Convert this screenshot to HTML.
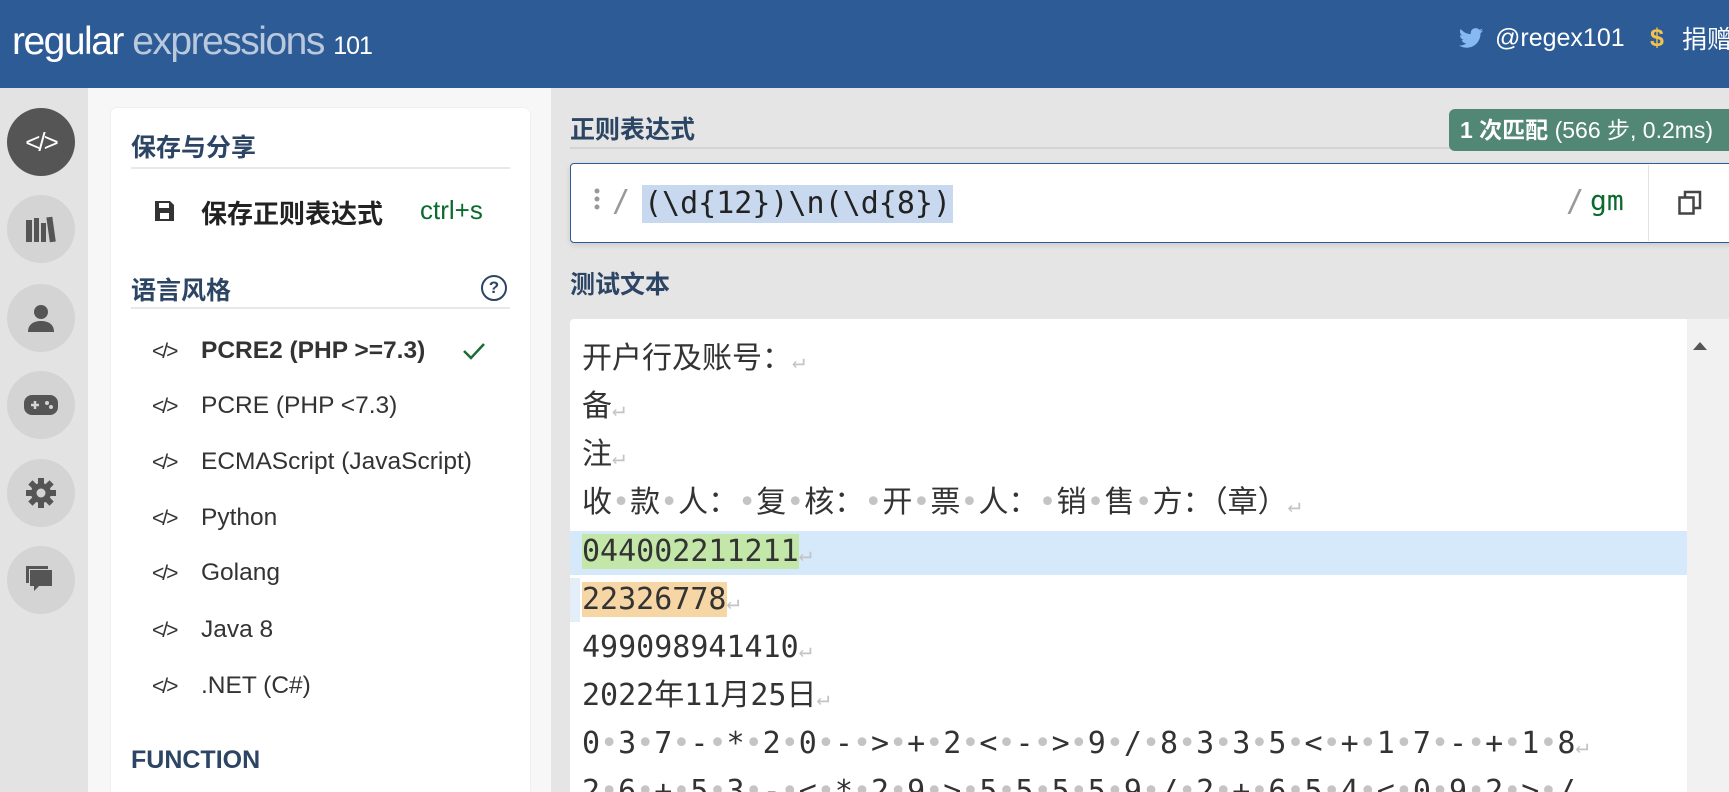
<!DOCTYPE html>
<html><head><meta charset="utf-8"><style>
*{box-sizing:border-box;margin:0;padding:0}
html,body{width:1729px;height:792px;overflow:hidden}
body{background:#e5e5e5;font-family:"Liberation Sans","Noto Sans CJK SC",sans-serif;position:relative}
.abs{position:absolute}
#hdr{left:0;top:0;width:1729px;height:88px;background:#2c5b96}
.logo{left:12px;top:20px;font-size:39px;color:#fff;letter-spacing:-1.5px;white-space:nowrap}
.logo .e{color:#b9c8dc}.logo .n{font-size:25px;letter-spacing:-1px}
.hr{top:24px;font-size:25px;color:#fff;white-space:nowrap}
#side{left:0;top:88px;width:88px;height:704px;background:#e3e3e3}
.circ{left:7px;width:68px;height:68px;border-radius:50%;background:#d4d4d4;display:flex;align-items:center;justify-content:center}
#pan{left:88px;top:88px;width:463px;height:704px;background:#f7f7f7}
#card{left:111px;top:108px;width:419px;height:684px;background:#fff;border-radius:6px 6px 0 0;box-shadow:0 0 2px rgba(0,0,0,.08)}
.h{font-weight:bold;font-size:25px;color:#2d4565;white-space:nowrap}
.line{height:2px;background:#e8e8e8}
.it{left:152px;font-size:24.5px;color:#333;white-space:nowrap}
.it .ic{display:inline-block;width:49px;font-size:21px;color:#333;letter-spacing:-2px}
.mono{font-family:"DejaVu Sans Mono","Noto Sans CJK SC",monospace}
#tb{left:570px;top:319px;width:1159px;height:473px;background:#fff;border-radius:4px 0 0 0;overflow:hidden}
.tl{left:12px;height:48px;line-height:48px;font-size:30px;color:#333;white-space:pre}
.d{color:#c4c4c4}.r{color:#c4c4c4;font-size:22px}
</style></head><body>
<div id="hdr" class="abs"></div>
<div class="abs logo">regular <span class="e">expressions</span> <span class="n">101</span></div>
<svg class="abs" style="left:1459px;top:28px" width="24" height="20" viewBox="0 0 24 20"><path d="M24 2.4c-.9.4-1.8.6-2.8.8 1-.6 1.800-1.600 2.2-2.7-1 .6-2 1-3.1 1.2C19.3.7 18 .1 16.6.1c-2.7 0-4.9 2.2-4.9 4.9 0 .4 0 .8.1 1.1C7.7 5.9 4.1 4 1.7 1 1.2 1.8 1 2.6 1 3.5c0 1.7.9 3.2 2.2 4.1-.8 0-1.6-.2-2.2-.6v.1c0 2.4 1.7 4.4 3.9 4.8-.4.1-.8.2-1.300.2-.3 0-.6 0-.9-.1.6 2 2.4 3.4 4.6 3.4-1.7 1.300-3.8 2.100-6.100 2.100H0c2.2 1.4 4.8 2.2 7.5 2.2 9.1 0 14-7.5 14-14v-.6c1-.7 1.8-1.6 2.5-2.5z" fill="#86b9f0"/></svg>
<div class="abs hr" style="left:1495px">@regex101</div>
<div class="abs hr" style="left:1650px;color:#f2c14e;font-weight:bold">$</div>
<div class="abs hr" style="left:1682px;top:20px">捐赠</div>

<div id="side" class="abs"></div>
<div class="abs circ" style="top:108px;background:#555"><span style="color:#fff;font-size:26px;letter-spacing:-2px">&lt;/&gt;</span></div>
<div class="abs circ" style="top:195px"><svg width="32" height="30"><rect x="1" y="6" width="6" height="22" fill="#555"/><rect x="9" y="4" width="5" height="24" fill="#555"/><rect x="16" y="9" width="5" height="19" fill="#555"/><rect x="23" y="3" width="6" height="25" fill="#555" transform="rotate(-8 26 15)"/></svg></div>
<div class="abs circ" style="top:284px"><svg width="30" height="30"><circle cx="15" cy="9" r="7" fill="#555"/><path d="M2 29c0-8 6-11 13-11s13 3 13 11z" fill="#555"/></svg></div>
<div class="abs circ" style="top:371px"><svg width="36" height="24"><rect x="1" y="2" width="34" height="20" rx="8" fill="#555"/><path d="M8 12h8M12 8v8" stroke="#d4d4d4" stroke-width="2.5"/><circle cx="24" cy="10" r="2" fill="#d4d4d4"/><circle cx="28" cy="14" r="2" fill="#d4d4d4"/></svg></div>
<div class="abs circ" style="top:459px"><svg width="32" height="32" viewBox="0 0 32 32"><g fill="#555"><circle cx="16" cy="16" r="10"/><rect x="13" y="1" width="6" height="30"/><rect x="13" y="1" width="6" height="30" transform="rotate(45 16 16)"/><rect x="13" y="1" width="6" height="30" transform="rotate(90 16 16)"/><rect x="13" y="1" width="6" height="30" transform="rotate(135 16 16)"/></g><circle cx="16" cy="16" r="4.5" fill="#d4d4d4"/></svg></div>
<div class="abs circ" style="top:546px"><svg width="32" height="30"><path d="M5 5h22v16H14l-5 5v-5H5z" fill="#555"/><path d="M1 1h22v3H4v14H1z" fill="#555"/></svg></div>

<div id="pan" class="abs"></div>
<div id="card" class="abs"></div>
<div class="abs h" style="left:131px;top:128px">保存与分享</div>
<div class="abs line" style="left:131px;top:167px;width:379px"></div>
<svg class="abs" style="left:155px;top:201px" width="19" height="20"><path d="M0 0h15l4 4v16H0z" fill="#333"/><rect x="4" y="2" width="10" height="5" fill="#fff"/><rect x="5" y="12" width="9" height="6" fill="#fff"/></svg>
<div class="abs" style="left:201px;top:194px;font-size:26px;font-weight:bold;color:#222">保存正则表达式</div>
<div class="abs" style="left:420px;top:195px;font-size:26px;color:#0b6b2e">ctrl+s</div>
<div class="abs h" style="left:131px;top:271px">语言风格</div>
<div class="abs" style="left:481px;top:275px;width:26px;height:26px;border:2.5px solid #2d4565;border-radius:50%;text-align:center;font-size:17px;font-weight:bold;line-height:21px;color:#2d4565">?</div>
<div class="abs line" style="left:131px;top:307px;width:379px"></div>
<div class="abs it" style="top:337px;font-weight:bold"><span class="ic" style="font-weight:normal">&lt;/&gt;</span>PCRE2 (PHP &gt;=7.3)</div>
<svg class="abs" style="left:462px;top:342px" width="24" height="18"><path d="M2 9l7 7L22 2" stroke="#1d6b36" stroke-width="2.5" fill="none"/></svg>
<div class="abs it" style="top:392px"><span class="ic">&lt;/&gt;</span>PCRE (PHP &lt;7.3)</div>
<div class="abs it" style="top:448px"><span class="ic">&lt;/&gt;</span>ECMAScript (JavaScript)</div>
<div class="abs it" style="top:504px"><span class="ic">&lt;/&gt;</span>Python</div>
<div class="abs it" style="top:559px"><span class="ic">&lt;/&gt;</span>Golang</div>
<div class="abs it" style="top:616px"><span class="ic">&lt;/&gt;</span>Java 8</div>
<div class="abs it" style="top:672px"><span class="ic">&lt;/&gt;</span>.NET (C#)</div>
<div class="abs h" style="left:131px;top:746px;font-size:25px">FUNCTION</div>

<div class="abs h" style="left:570px;top:110px">正则表达式</div>
<div class="abs line" style="left:570px;top:147px;width:883px;background:#d4d4d4"></div>
<div class="abs" style="left:1449px;top:109px;width:290px;height:42px;background:#518774;border-radius:6px;color:#fff;font-size:23px;line-height:42px;padding-left:11px;white-space:nowrap"><b>1 次匹配</b> (566 步, 0.2ms)</div>
<div class="abs" style="left:570px;top:163px;width:1170px;height:80px;background:#fff;border:1px solid #2c5b96;border-radius:4px;box-shadow:0 2px 6px rgba(0,0,0,.12)"></div>
<svg class="abs" style="left:594px;top:188px" width="6" height="24"><circle cx="3" cy="3" r="2.5" fill="#999"/><circle cx="3" cy="11" r="2.5" fill="#999"/><circle cx="3" cy="19" r="2.5" fill="#999"/></svg>
<div class="abs mono" style="left:612px;top:184px;font-size:30px;color:#999">/</div>
<div class="abs mono" style="left:642px;top:185px;height:38px;line-height:38px;background:#c8d9ef;font-size:30px;color:#222;padding:0 2px">(\d{12})\n(\d{8})</div>
<div class="abs mono" style="left:1566px;top:184px;font-size:30px;color:#999">/</div>
<div class="abs mono" style="left:1590px;top:184px;font-size:28px;color:#0b6b2e">gm</div>
<div class="abs" style="left:1648px;top:165px;width:1px;height:76px;background:#e3e3e3"></div>
<svg class="abs" style="left:1678px;top:190px" width="24" height="26"><rect x="1.5" y="7.5" width="14" height="16" fill="none" stroke="#444" stroke-width="2.5"/><path d="M7 7V2h15v16h-6" fill="none" stroke="#444" stroke-width="2.5"/></svg>

<div class="abs h" style="left:570px;top:265px">测试文本</div>
<div id="tb" class="abs">
<div class="abs" style="left:0;top:212px;width:1117px;height:44px;background:#d6e9fb"></div>
<div class="abs" style="left:0;top:259px;width:10px;height:44px;background:#e3eef9"></div>
<div class="abs" style="right:0;top:0;width:42px;height:480px;background:#f1f1f1"></div>
<svg class="abs" style="left:1123px;top:22px" width="14" height="10"><path d="M0 9L7 1l7 8z" fill="#555"/></svg>
<div class="abs tl mono" style="top:16px">开户行及账号：<span class="r">↵</span></div>
<div class="abs tl mono" style="top:64px">备<span class="r">↵</span></div>
<div class="abs tl mono" style="top:112px">注<span class="r">↵</span></div>
<div class="abs tl mono" style="top:160px">收<span class="d">•</span>款<span class="d">•</span>人：<span class="d">•</span>复<span class="d">•</span>核：<span class="d">•</span>开<span class="d">•</span>票<span class="d">•</span>人：<span class="d">•</span>销<span class="d">•</span>售<span class="d">•</span>方：（章）<span class="r">↵</span></div>
<div class="abs tl mono" style="top:209px"><span style="background:#c3e6a9">044002211211</span><span class="r">↵</span></div>
<div class="abs tl mono" style="top:257px"><span style="background:#f7d6a5">22326778</span><span class="r">↵</span></div>
<div class="abs tl mono" style="top:305px">499098941410<span class="r">↵</span></div>
<div class="abs tl mono" style="top:353px">2022年11月25日<span class="r">↵</span></div>
<div class="abs tl mono" style="top:401px">0<span class="d">•</span>3<span class="d">•</span>7<span class="d">•</span>-<span class="d">•</span>*<span class="d">•</span>2<span class="d">•</span>0<span class="d">•</span>-<span class="d">•</span>&gt;<span class="d">•</span>+<span class="d">•</span>2<span class="d">•</span>&lt;<span class="d">•</span>-<span class="d">•</span>&gt;<span class="d">•</span>9<span class="d">•</span>/<span class="d">•</span>8<span class="d">•</span>3<span class="d">•</span>3<span class="d">•</span>5<span class="d">•</span>&lt;<span class="d">•</span>+<span class="d">•</span>1<span class="d">•</span>7<span class="d">•</span>-<span class="d">•</span>+<span class="d">•</span>1<span class="d">•</span>8<span class="r">↵</span></div>
<div class="abs tl mono" style="top:449px">2<span class="d">•</span>6<span class="d">•</span>+<span class="d">•</span>5<span class="d">•</span>3<span class="d">•</span>-<span class="d">•</span>&lt;<span class="d">•</span>*<span class="d">•</span>2<span class="d">•</span>9<span class="d">•</span>&gt;<span class="d">•</span>5<span class="d">•</span>5<span class="d">•</span>5<span class="d">•</span>5<span class="d">•</span>9<span class="d">•</span>/<span class="d">•</span>2<span class="d">•</span>+<span class="d">•</span>6<span class="d">•</span>5<span class="d">•</span>4<span class="d">•</span>&lt;<span class="d">•</span>0<span class="d">•</span>9<span class="d">•</span>2<span class="d">•</span>&gt;<span class="d">•</span>/</div>
</div>
</body></html>
